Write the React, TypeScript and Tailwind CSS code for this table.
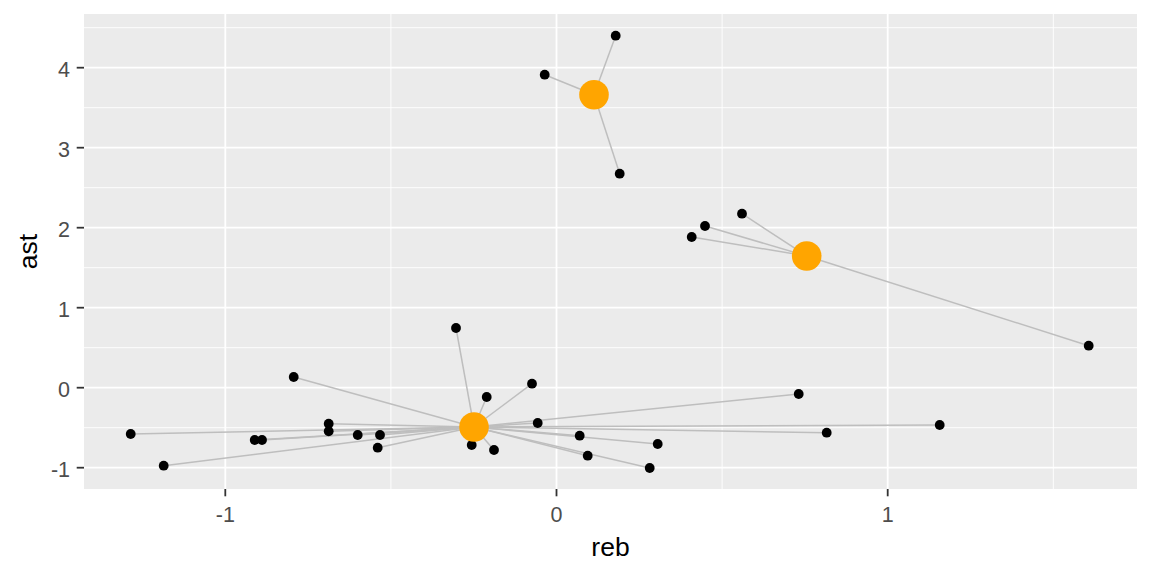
import React from 'react'

// panel geometry (px)
const PANEL = { left: 84, right: 1137, top: 14, bottom: 489 }
const X0 = 556.5 // x pixel at reb = 0
const XU = 331.2 // px per reb unit
const Y0 = 387.7 // y pixel at ast = 0
const YU = 80 // px per ast unit

const px = (v: number) => X0 + v * XU
const py = (v: number) => Y0 - v * YU

type Pt = [number, number]

const clusters: { center: Pt; members: Pt[] }[] = [
  {
    center: [594, 94.7],
    members: [
      [615.7, 35.7],
      [544.7, 74.7],
      [619.7, 173.7],
    ],
  },
  {
    center: [806.7, 256],
    members: [
      [742, 213.7],
      [705, 226],
      [691.7, 237],
      [1088.7, 345.7],
    ],
  },
  {
    center: [474, 427],
    members: [
      [130.7, 434],
      [163.7, 465.7],
      [293.7, 377],
      [254.7, 440],
      [262, 440],
      [328.7, 423.7],
      [328.7, 431.3],
      [357.7, 435],
      [380, 435],
      [377.7, 447.7],
      [456, 328],
      [486.7, 397],
      [471.7, 445],
      [494, 450],
      [532, 383.7],
      [537.7, 423],
      [579.7, 435.7],
      [657.7, 444],
      [587.7, 455.7],
      [649.7, 468],
      [798.7, 394],
      [826.7, 432.7],
      [939.7, 425],
    ],
  },
]

const xMajor = [-1, 0, 1]
const xMinor = [-0.5, 0.5, 1.5]
const yMajor = [-1, 0, 1, 2, 3, 4]
const yMinor = [-0.5, 0.5, 1.5, 2.5, 3.5, 4.5]

function ScatterPanel() {
  const { left, right, top, bottom } = PANEL
  return (
    <svg width={1152} height={576} viewBox="0 0 1152 576" className="block font-['Liberation_Sans',Arial,sans-serif]">
      {/* panel background */}
      <rect x={left} y={top} width={right - left} height={bottom - top} fill="#EBEBEB" />

      {/* grid */}
      {xMinor.map((v) => (
        <line key={`xm${v}`} x1={px(v)} x2={px(v)} y1={top} y2={bottom} stroke="#fff" strokeWidth={0.9} />
      ))}
      {yMinor.map((v) => (
        <line key={`ym${v}`} x1={left} x2={right} y1={py(v)} y2={py(v)} stroke="#fff" strokeWidth={0.9} />
      ))}
      {xMajor.map((v) => (
        <line key={`xM${v}`} x1={px(v)} x2={px(v)} y1={top} y2={bottom} stroke="#fff" strokeWidth={1.8} />
      ))}
      {yMajor.map((v) => (
        <line key={`yM${v}`} x1={left} x2={right} y1={py(v)} y2={py(v)} stroke="#fff" strokeWidth={1.8} />
      ))}

      {/* segments */}
      {clusters.map((c, i) =>
        c.members.map(([x, y], j) => (
          <line key={`s${i}-${j}`} x1={c.center[0]} y1={c.center[1]} x2={x} y2={y} stroke="#BEBEBE" strokeWidth={1.5} />
        ))
      )}

      {/* points */}
      {clusters.map((c, i) =>
        c.members.map(([x, y], j) => <circle key={`p${i}-${j}`} cx={x} cy={y} r={4.9} fill="#000" />)
      )}

      {/* centroids */}
      {clusters.map((c, i) => (
        <circle key={`c${i}`} cx={c.center[0]} cy={c.center[1]} r={14.8} fill="#FFA500" />
      ))}

      {/* y axis ticks + labels */}
      {yMajor.map((v) => (
        <g key={`yt${v}`}>
          <line x1={left - 7.3} x2={left} y1={py(v)} y2={py(v)} stroke="#333" strokeWidth={1.8} />
          <text x={left - 14} y={py(v) + 9.3} textAnchor="end" fontSize={21.5} fill="#4D4D4D">
            {v}
          </text>
        </g>
      ))}

      {/* x axis ticks + labels */}
      {xMajor.map((v) => (
        <g key={`xt${v}`}>
          <line x1={px(v)} x2={px(v)} y1={bottom} y2={bottom + 7.3} stroke="#333" strokeWidth={1.8} />
          <text x={px(v)} y={521.7} textAnchor="middle" fontSize={21.5} fill="#4D4D4D">
            {v}
          </text>
        </g>
      ))}

      {/* axis titles */}
      <text x={(left + right) / 2} y={556} textAnchor="middle" fontSize={26.5} fill="#000">
        reb
      </text>
      <text
        x={0}
        y={0}
        transform={`translate(37, ${(top + bottom) / 2}) rotate(-90)`}
        textAnchor="middle"
        fontSize={26.5}
        fill="#000"
      >
        ast
      </text>
    </svg>
  )
}

export default function App() {
  return (
    <div className="w-[1152px] h-[576px] bg-white overflow-hidden">
      <ScatterPanel />
    </div>
  )
}
